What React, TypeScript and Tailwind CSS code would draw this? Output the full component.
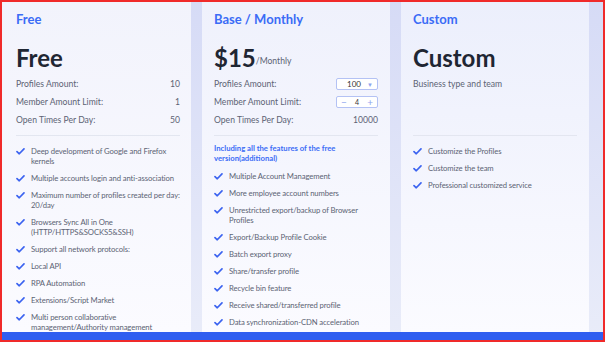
const Check = () => (
  <svg viewBox="0 0 10 8" className="w-[9px] h-[7px] shrink-0 mt-[2px]">
    <path d="M1 4.2 L3.6 6.6 L9 1" fill="none" stroke="#3b63f0" strokeWidth="1.9" strokeLinecap="round" strokeLinejoin="round" />
  </svg>
);

function Feature({ children }: { children: React.ReactNode }) {
  return (
    <li className="flex gap-[6px] text-[7.7px] leading-[10px] tracking-[-0.1px] text-[#5c6374]">
      <Check />
      <span>{children}</span>
    </li>
  );
}

function Row({ label, children }: { label: string; children: React.ReactNode }) {
  return (
    <div className="flex shrink-0 items-center justify-between h-[18px] text-[8.6px] text-[#5c6374]">
      <span>{label}</span>
      {children}
    </div>
  );
}

const freeFeatures = [
  "Deep development of Google and Firefox kernels",
  "Multiple accounts login and anti-association",
  "Maximum number of profiles created per day: 20/day",
  "Browsers Sync All in One (HTTP/HTTPS&SOCKS5&SSH)",
  "Support all network protocols:",
  "Local API",
  "RPA Automation",
  "Extensions/Script Market",
  "Multi person collaborative management/Authority management",
];

const baseFeatures = [
  "Multiple Account Management",
  "More employee account numbers",
  "Unrestricted export/backup of Browser Profiles",
  "Export/Backup Profile Cookie",
  "Batch export proxy",
  "Share/transfer profile",
  "Recycle bin feature",
  "Receive shared/transferred profile",
  "Data synchronization-CDN acceleration",
];

const customFeatures = ["Customize the Profiles", "Customize the team", "Professional customized service"];

export default function App() {
  return (
    <div
      className="w-[605px] h-[342px] border-2 border-[#f02a2a] bg-gradient-to-b from-[#d6dbf6] to-[#e9ecf9] flex flex-col overflow-hidden"
      style={{ fontFamily: 'Lato, "Noto Sans", sans-serif' }}
    >
      <div className="flex flex-1 gap-[11px] min-h-0">
        {/* Free */}
        <div className="w-[189px] shrink-0 bg-gradient-to-b from-[#f2f3fc] to-[#fbfbff] pl-[14px] pr-[11px] flex flex-col">
          <h3 className="shrink-0 text-[13px] font-bold text-[#3b6cf6] mt-[8px] leading-[18px]">Free</h3>
          <div className="shrink-0 text-[24px] font-bold text-[#1f2633] leading-[30px] mt-[15px] mb-[2px]">Free</div>
          <Row label="Profiles Amount:"><span>10</span></Row>
          <Row label="Member Amount Limit:"><span>1</span></Row>
          <Row label="Open Times Per Day:"><span>50</span></Row>
          <div className="shrink-0 h-px bg-[#e3e6f0] mt-[6px] mb-[10px]" />
          <ul className="flex flex-col gap-[7px]">
            {freeFeatures.map((f) => (
              <Feature key={f}>{f}</Feature>
            ))}
          </ul>
        </div>

        {/* Base / Monthly */}
        <div className="w-[188px] shrink-0 bg-gradient-to-b from-[#eff1fc] to-[#fbfbff] px-[12px] flex flex-col">
          <h3 className="shrink-0 text-[13px] font-bold text-[#3b6cf6] mt-[8px] leading-[18px]">Base / Monthly</h3>
          <div className="shrink-0 flex items-end mt-[15px] mb-[2px]">
            <span className="text-[24px] font-bold text-[#1f2633] leading-[30px]">$15</span>
            <span className="text-[8.6px] text-[#5c6374] mb-[5px]">/Monthly</span>
          </div>
          <Row label="Profiles Amount:">
            <div className="w-[42px] h-[12px] border border-[#b4c2f4] rounded-[2px] bg-white flex items-center justify-between pl-[10px] pr-[4px] text-[8px] text-[#333]">
              <span>100</span>
              <span className="text-[#8ea4ee] text-[6px]">▼</span>
            </div>
          </Row>
          <Row label="Member Amount Limit:">
            <div className="w-[42px] h-[12px] border border-[#b4c2f4] rounded-[2px] bg-white flex items-center justify-between px-[4px] text-[8px] text-[#333]">
              <span className="text-[#8ea4ee] text-[10px] leading-none">−</span>
              <span className="text-[7px]">4</span>
              <span className="text-[#8ea4ee] text-[10px] leading-none">+</span>
            </div>
          </Row>
          <Row label="Open Times Per Day:"><span>10000</span></Row>
          <div className="shrink-0 h-px bg-[#e3e6f0] mt-[6px] mb-[7px]" />
          <p className="shrink-0 text-[7.7px] leading-[10px] font-bold text-[#3b6cf6] mb-[8px]">
            Including all the features of the free version(additional)
          </p>
          <ul className="flex flex-col gap-[7px]">
            {baseFeatures.map((f) => (
              <Feature key={f}>{f}</Feature>
            ))}
          </ul>
        </div>

        {/* Custom */}
        <div className="w-[188px] shrink-0 bg-gradient-to-b from-[#eceffc] to-[#fbfbff] px-[12px] flex flex-col">
          <h3 className="shrink-0 text-[13px] font-bold text-[#3b6cf6] mt-[8px] leading-[18px]">Custom</h3>
          <div className="shrink-0 text-[24px] font-bold text-[#1f2633] leading-[30px] mt-[15px] mb-[2px]">Custom</div>
          <div className="shrink-0 h-[18px] flex items-center text-[8.6px] text-[#5c6374]">Business type and team</div>
          <div className="shrink-0 h-px bg-[#e3e6f0] mt-[42px] mb-[10px]" />
          <ul className="flex flex-col gap-[7px]">
            {customFeatures.map((f) => (
              <Feature key={f}>{f}</Feature>
            ))}
          </ul>
        </div>
      </div>
      <div className="h-[8px] bg-[#2f5ef0] shrink-0" />
    </div>
  );
}
